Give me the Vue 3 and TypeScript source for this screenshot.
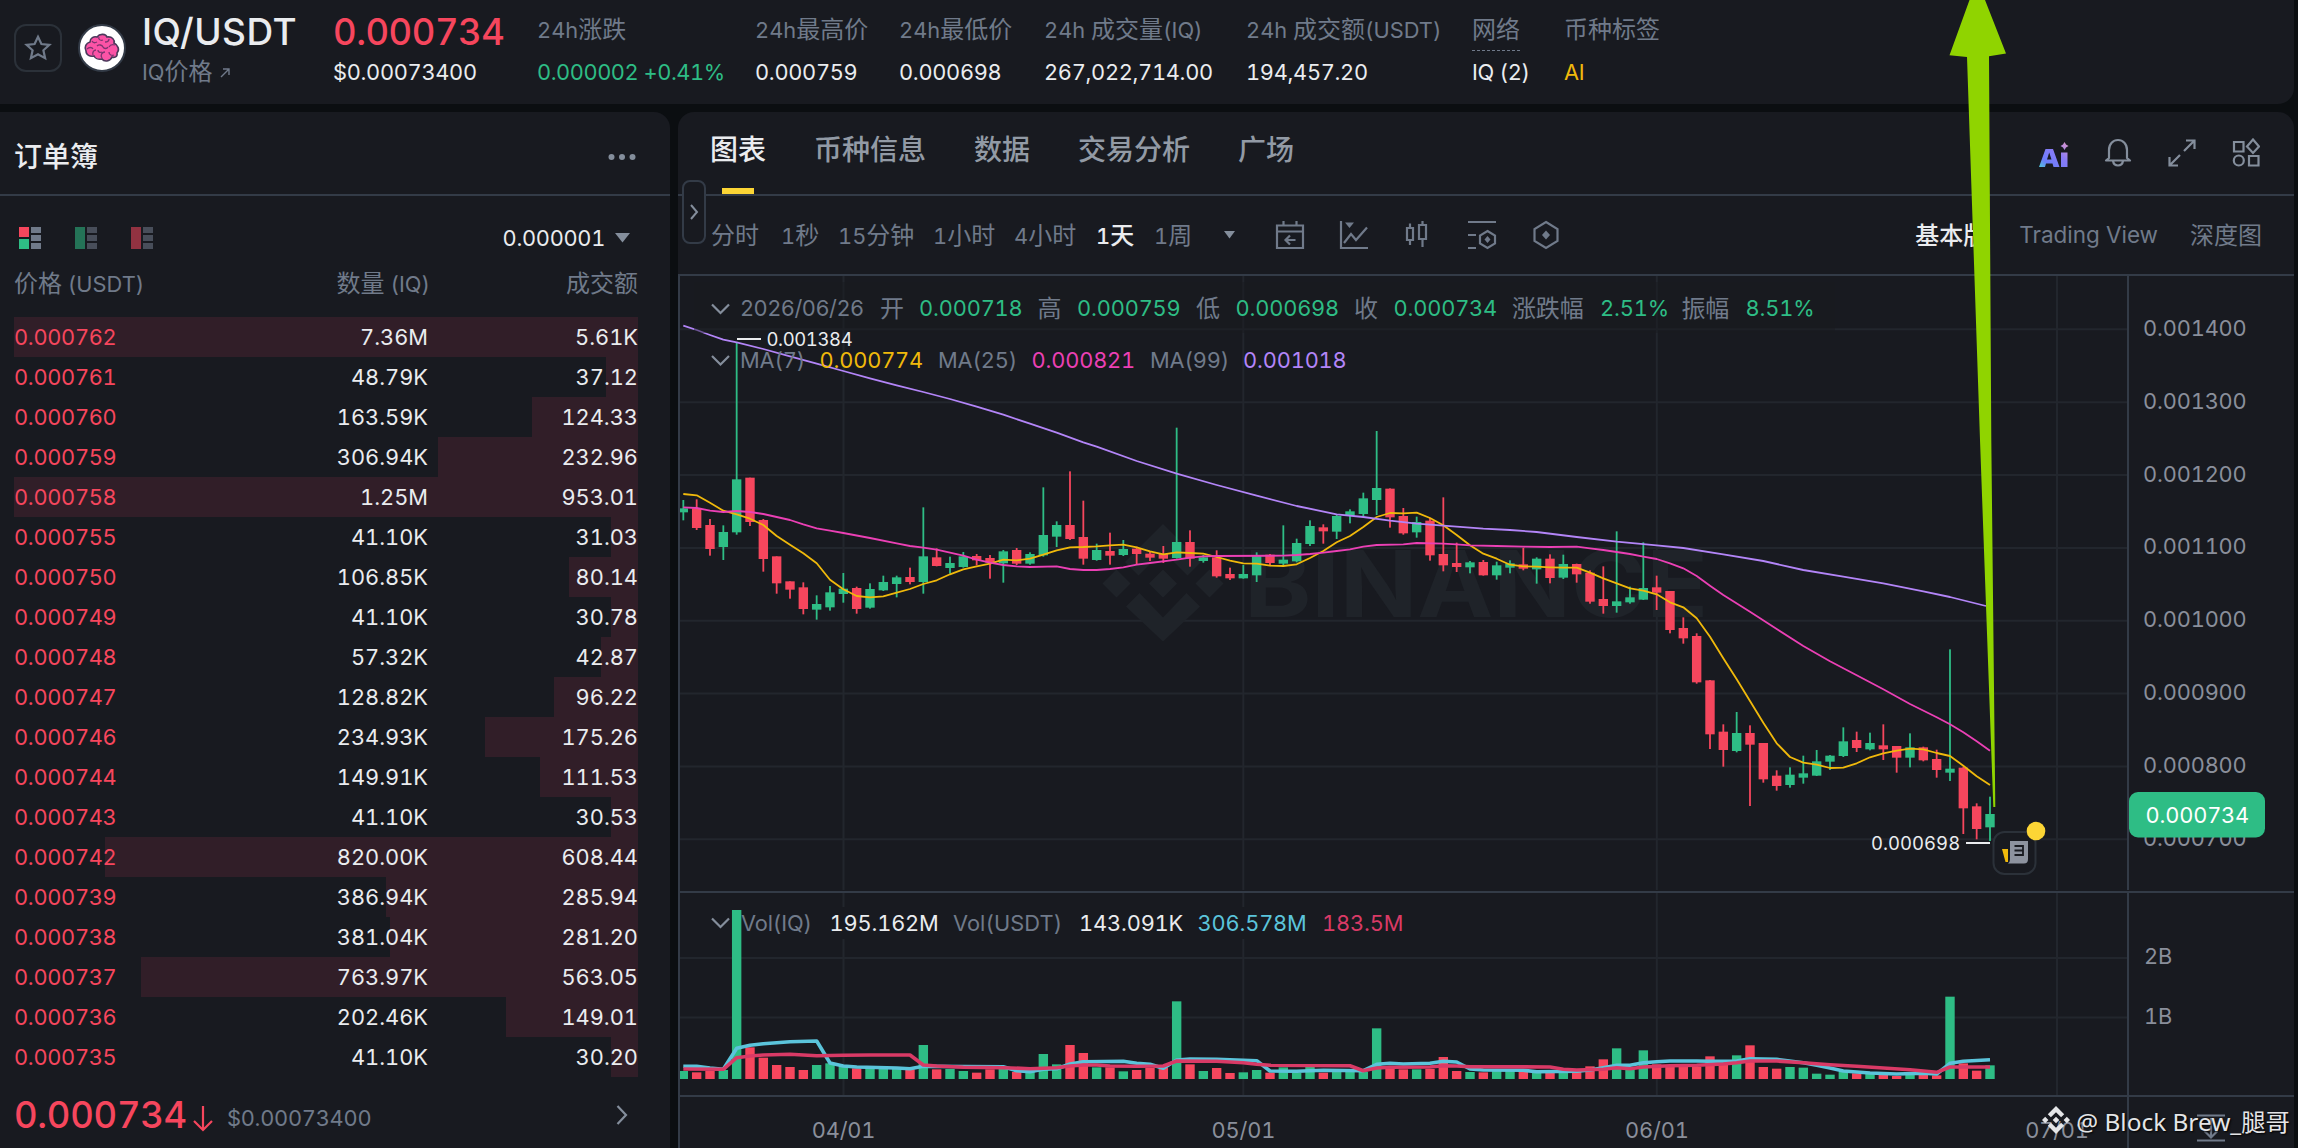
<script setup lang="ts">
interface Candle { x: number; up: boolean; high: number; top: number; bottom: number; low: number; vol: number }
interface Ask { price: string; qty: string; total: string; depth: number }

const stats = [
  { pre: '24h', label: '涨跌', post: '', value: '0.000002 +0.41%', width: 218, cls: 'up' },
  { pre: '24h', label: '最高价', post: '', value: '0.000759', width: 144, cls: '' },
  { pre: '24h', label: '最低价', post: '', value: '0.000698', width: 145, cls: '' },
  { pre: '24h ', label: '成交量', post: '(IQ)', value: '267,022,714.00', width: 202, cls: '' },
  { pre: '24h ', label: '成交额', post: '(USDT)', value: '194,457.20', width: 226, cls: '' },
  { pre: '', label: '网络', post: '', value: 'IQ (2)', width: 92, cls: 'net' },
  { pre: '', label: '币种标签', post: '', value: 'AI', width: 110, cls: 'tag' },
]

const asks: Ask[] = ([
  ['0.000762', '7.36M', '5.61K', 624], ['0.000761', '48.79K', '37.12', 32], ['0.000760', '163.59K', '124.33', 106],
  ['0.000759', '306.94K', '232.96', 200], ['0.000758', '1.25M', '953.01', 624], ['0.000755', '41.10K', '31.03', 27],
  ['0.000750', '106.85K', '80.14', 69], ['0.000749', '41.10K', '30.78', 27], ['0.000748', '57.32K', '42.87', 37],
  ['0.000747', '128.82K', '96.22', 84], ['0.000746', '234.93K', '175.26', 153], ['0.000744', '149.91K', '111.53', 98],
  ['0.000743', '41.10K', '30.53', 27], ['0.000742', '820.00K', '608.44', 533], ['0.000739', '386.94K', '285.94', 252],
  ['0.000738', '381.04K', '281.20', 248], ['0.000737', '763.97K', '563.05', 497], ['0.000736', '202.46K', '149.01', 132],
  ['0.000735', '41.10K', '30.20', 27],
] as [string, string, string, number][]).map(([price, qty, total, depth]) => ({ price, qty, total, depth }))

const tabs = ['图表', '币种信息', '数据', '交易分析', '广场']
const intervals = [
  { n: '', t: '分时', w: 70 }, { n: '1', t: '秒', w: 57 }, { n: '15', t: '分钟', w: 95 }, { n: '1', t: '小时', w: 81 },
  { n: '4', t: '小时', w: 82 }, { n: '1', t: '天', w: 58 }, { n: '1', t: '周', w: 67 },
]

const X0 = 683.33
const STEP = 13.3333
const cx = (i: number): number => X0 + i * STEP

// Each entry: direction, high, body top, body bottom, low in thirds of a pixel below y = 300
const series = `g600,625,637,661 r598,625,684,690 r657,675,747,767 g676,696,741,780 g127,538,697,704 r533,533,666,678
r657,660,777,815 r769,769,850,881 r844,844,869,896 r847,862,927,943 g886,912,929,959 g858,877,922,932 g819,866,882,908
r860,864,927,941 g850,867,923,926 g827,846,871,873 g827,832,852,892 r803,831,846,853 g622,769,846,881 r745,772,798,799
g770,789,804,821 g756,769,801,803 r762,768,781,796 r765,774,788,836 g750,754,790,848 r744,750,791,795 g757,762,791,794
g562,705,766,770 g664,675,710,741 r514,675,717,720 r602,711,776,794 g731,750,780,782 r698,753,767,794 g720,747,765,768
r740,746,762,794 r755,761,773,783 r738,762,776,789 g383,726,774,776 r691,726,776,800 g765,772,783,788 r751,772,829,833
r803,822,835,840 g795,822,835,836 g757,767,826,846 r762,764,789,797 g676,779,791,795 g716,729,784,787 g661,678,732,738
r673,682,694,731 g645,648,695,717 g628,634,647,670 g578,595,642,649 g393,564,600,645 r565,566,652,683 r624,648,700,704
g650,666,697,713 r654,662,766,782 r592,762,796,814 r728,789,801,816 g783,787,802,820 r780,786,826,827 g785,796,826,839
g781,790,803,820 r743,793,806,811 g772,776,808,851 r763,776,834,850 g764,792,833,837 r791,792,823,848 r811,818,905,911
r799,897,918,941 g694,904,918,938 g860,892,907,911 g727,864,899,900 r827,862,878,930 r873,873,990,1000 r952,984,1015,1031
r1000,1008,1147,1151 r1140,1141,1303,1347 r1273,1295,1350,1400 g1236,1299,1353,1357 r1276,1299,1334,1518
r1329,1329,1438,1448 r1411,1427,1458,1472 g1402,1424,1455,1463 g1367,1420,1433,1451 g1350,1384,1427,1428
g1365,1367,1385,1410 g1282,1324,1368,1371 r1295,1320,1344,1356 g1298,1329,1348,1351 r1273,1336,1348,1380
r1338,1338,1373,1418 g1300,1342,1373,1402 r1340,1342,1381,1384 r1349,1377,1410,1433 g1048,1406,1418,1443
r1400,1403,1525,1602 r1510,1519,1587,1618 g1490,1542,1582,1623`

// Bar heights, thirds of a pixel
const volumes = `24 20 24 27 507 95 64 42 36 27 42 47 37 32 30 30 30 29 102 29 30 24 19 29 30 21 21 75 44 102 78 35 35 23 27 33 35 233
44 24 33 18 20 27 19 35 19 39 19 22 22 22 152 32 29 29 30 66 24 21 20 26 24 26 19 18 21 21 38 59 92 31 86 44 37 37 37 68 45 71 101
36 31 36 34 16 13 21 17 17 12 9 12 12 11 247 47 25 41`.trim().split(/\s+/).map(Number)

const candles: Candle[] = series.trim().split(/\s+/).map((s, i) => {
  const [high, top, bottom, low] = s.slice(1).split(',').map(v => 300 + Number(v) / 3)
  return { x: cx(i), up: s[0] === 'g', high, top, bottom, low, vol: volumes[i] / 3 }
})

const line = (pairs: string, base: number): string =>
  pairs.trim().split(/\s+/).map(p => {
    const [i, v] = p.split(':').map(Number)
    return `${cx(i).toFixed(1)},${(base + v / 3).toFixed(1)}`
  }).join(' ')

const dense = (values: string): string => values.trim().split(/\s+/).map((v, i) => `${i}:${v}`).join(' ')

const ma7 = line(dense(`582 586 608 632 643 656 675 708 734 760 790 839 868 888 892 889 878 867 852 841 823 808 799 791 779 781 776 764
751 742 741 739 736 734 742 754 763 757 759 761 771 782 790 791 797 798 793 774 753 727 708 681 651 639 640 638 654 676 705 736 761
776 794 799 800 802 803 803 818 835 850 865 872 883 907 922 955 1010 1075 1138 1203 1268 1330 1371 1388 1394 1404 1403 1390 1372
1360 1352 1346 1348 1359 1368 1397 1429 1455`), 300)
const ma25 = line(`0:622 1:624 2:632 3:636 4:633 5:636 6:642 7:651 8:660 9:673 10:685 11:692 12:699 14:714 16:730 17:738 18:743
19:749 20:758 21:767 22:779 23:788 24:795 25:799 26:801 28:799 29:807 30:810 31:810 32:807 33:802 34:794 35:789 37:779 38:773
39:769 40:768 45:767 46:765 47:762 48:758 49:753 50:748 51:740 52:735 54:733 55:729 57:731 58:733 59:736 61:738 63:740 65:741
67:740 68:745 69:750 70:756 71:762 72:770 73:777 74:790 75:805 76:828 77:857 78:885 80:935 82:987 84:1038 86:1084 88:1126
90:1168 92:1212 94:1252 95:1273 96:1297 97:1324 98:1352`, 300)
const ma99 = line(`0:77 1:90 2:105 3:119 4:127 6:147 8:169 10:191 12:213 14:235 16:256 18:276 20:297 22:320 24:344 26:371 28:398
30:427 31:440 34:483 37:521 40:555 43:587 46:618 49:643 51:651 53:662 55:671 57:677 60:686 62:690 64:696 67:711 70:725 73:736
75:744 78:763 81:783 84:810 87:830 90:850 93:874 95:891 97.7:918`, 300)
const volFast = line(`0:589 1:589 2:594 3:598 4:535 5:526 6:521 7:518 8:515 10:513 11:579 12:588 13:591 16:594 17:596 18:589
24:590 25:602 26:605 27:598 28:596 29:582 30:575 33:574 34:580 35:583 36:595 37:570 38:567 40:568 41:569 43:572 44:603 46:604
48:601 51:602 52:583 53:580 54:582 56:580 57:574 58:576 59:597 60:600 63:601 64:605 67:604 68:600 69:593 70:586 71:586 72:578
73:575 74:573 76:573 77:574 79:573 80:566 82:568 84:578 85:586 86:594 87:603 89:609 91:612 93:610 94:612 95:580 96:574 98:569`, 870)
const volSlow = line(`0:597 3:598 4:563 5:558 6:555 8:553 10:557 12:556 14:555 17:555 18:585 19:588 21:592 24:593 26:596 28:593
29:588 30:585 31:585 32:588 34:589 36:588 37:573 40:574 42:578 43:583 44:586 50:587 51:602 52:594 53:592 56:591 57:587 58:588
59:590 65:591 66:598 67:600 69:598 70:593 71:596 72:591 74:587 76:586 78:582 79:578 80:573 82:573 84:578 86:584 88:589 90:594
92:599 94:607 95:591 98:591`, 870)

const priceTicks = ['0.001400', '0.001300', '0.001200', '0.001100', '0.001000', '0.000900', '0.000800', '0.000700']
  .map((label, i) => ({ label, y: 329.3 + i * 72.86 }))
const dates = [{ label: '04/01', x: 843.5 }, { label: '05/01', x: 1243.3 }, { label: '06/01', x: 1656.8 }, { label: '07/01', x: 2057 }]

const ohlc = [
  { t: '开', x: 880, v: '0.000718', vx: 919 }, { t: '高', x: 1037.5, v: '0.000759', vx: 1077 },
  { t: '低', x: 1196, v: '0.000698', vx: 1235.5 }, { t: '收', x: 1354, v: '0.000734', vx: 1393.5 },
  { t: '涨跌幅', x: 1512, v: '2.51%', vx: 1600 }, { t: '振幅', x: 1681.5, v: '8.51%', vx: 1745.5 },
]
const averages = [
  { t: 'MA(7)', x: 740, v: '0.000774', vx: 819.5, c: '#f0b90b' },
  { t: 'MA(25)', x: 938, v: '0.000821', vx: 1031.5, c: '#eb40b5' },
  { t: 'MA(99)', x: 1150, v: '0.001018', vx: 1243, c: '#b385f8' },
]
</script>

<template>
  <div class="app">
    <header class="ticker">
      <div class="fav">
        <svg width="28" height="28" viewBox="0 0 28 28"><path d="M14 2.800l3.400 7.200 8 .9-6 5.400 1.700 7.900-7.100-4-7.100 4 1.700-7.900-6-5.400 8-.9z" fill="none" stroke="#707a8a" stroke-width="2.200" /></svg>
      </div>
      <svg class="coin" width="48" height="48" viewBox="0 0 48 48">
        <circle cx="24" cy="24" r="23" fill="#fff" stroke="#333b47" stroke-width="2" />
        <path d="M8 27c-2-4 0-8 4-9 0-4 4-6 7-5 3-4 9-3 10 0 5-1 8 3 7 6 4 2 6 7 3 10 1 4-3 5-5 4-2 5-8 5-10 2-4 1-7-1-8-3-4 1-8-1-8-5z" fill="#fb53a6" stroke="#4c3a5c" stroke-width="1.600" />
        <path d="M14 17c1 2 3 2 5 1M21 13c-1 2 1 4 4 3M31 15c0 2-2 3-4 3M37 21c-3-1-5 0-6 2M9 25c2-2 5-2 6 0M15 31c-1-3 1-5 3-5M24 34c-2-3 0-6 3-6M36 31c-2 1-5 0-5-3M19 22c2-2 5-1 6 1s4 2 5 0M24 28c-2 1-4 0-4-2" fill="none" stroke="#7d3470" stroke-width="1.300" />
      </svg>
      <div class="pair">
        <div class="pair-name">IQ/USDT</div>
        <div class="sub"><i>IQ</i>价格 <svg width="10" height="10" viewBox="0 0 10 10"><path d="M1 9L9 1M3 1h6v6" fill="none" stroke="#707a8a" stroke-width="1.400" /></svg></div>
      </div>
      <div class="last">
        <div class="last-price">0.000734</div>
        <div class="value">$0.00073400</div>
      </div>
      <div v-for="s in stats" :key="s.label" class="stat" :class="s.cls" :style="{ width: s.width + 'px' }">
        <div class="label"><span><i>{{ s.pre }}</i>{{ s.label }}<i>{{ s.post }}</i></span></div>
        <div class="value">{{ s.value }}</div>
      </div>
    </header>

    <div class="main">
      <section class="book">
        <div class="book-title">
          <span>订单簿</span>
          <svg width="28" height="8" viewBox="0 0 28 8" fill="#848e9c"><circle cx="3.500" cy="4" r="3" /><circle cx="14" cy="4" r="3" /><circle cx="24.500" cy="4" r="3" /></svg>
        </div>
        <div class="book-tools">
          <svg width="22" height="22" viewBox="0 0 22 22"><path d="M0 0h10v10H0z" fill="#f6465d" /><path d="M0 12h10v10H0z" fill="#2ebd85" /><path d="M12 0h10v6H12zM12 8h10v6H12zM12 16h10v6H12z" fill="#707a8a" /></svg>
          <svg width="22" height="22" viewBox="0 0 22 22" opacity=".55"><path d="M0 0h10v22H0z" fill="#2ebd85" /><path d="M12 0h10v6H12zM12 8h10v6H12zM12 16h10v6H12z" fill="#707a8a" /></svg>
          <svg width="22" height="22" viewBox="0 0 22 22" opacity=".55"><path d="M0 0h10v22H0z" fill="#f6465d" /><path d="M12 0h10v6H12zM12 8h10v6H12zM12 16h10v6H12z" fill="#707a8a" /></svg>
          <span class="tick">0.000001</span>
          <svg class="tri" width="16" height="10" viewBox="0 0 16 10"><path d="M0 0h15L7.500 9.500z" fill="#848e9c" /></svg>
        </div>
        <div class="book-head">
          <span>价格<i> (USDT)</i></span><span>数量<i> (IQ)</i></span><span>成交额</span>
        </div>
        <div v-for="a in asks" :key="a.price" class="ask">
          <div class="depth" :style="{ width: a.depth + 'px' }"></div>
          <span class="down">{{ a.price }}</span><span>{{ a.qty }}</span><span>{{ a.total }}</span>
        </div>
        <div class="book-last">
          <span class="big">0.000734</span>
          <svg class="arr" width="20" height="26" viewBox="0 0 20 26"><path d="M10 0v23M1 15l9 9 9-9" fill="none" stroke="#f6465d" stroke-width="2.200" /></svg>
          <span class="usd">$0.00073400</span>
          <svg width="12" height="20" viewBox="0 0 12 20"><path d="M1.500 1l8.500 9-8.500 9" fill="none" stroke="#848e9c" stroke-width="2.200" /></svg>
        </div>
      </section>

      <section class="panel">
        <nav class="tabs">
          <span v-for="(t, i) in tabs" :key="t" class="tab" :class="{ on: i === 0 }">{{ t }}</span>
          <div class="tab-icons">
            <svg width="30" height="30" viewBox="0 0 30 30">
              <defs><linearGradient id="ai" x1="0" y1="1" x2="1" y2="0"><stop offset="0" stop-color="#4fc9d8" /><stop offset=".22" stop-color="#6b7dfb" /><stop offset=".6" stop-color="#8a7bf5" /><stop offset="1" stop-color="#e39ac8" /></linearGradient></defs>
              <path fill="url(#ai)" fill-rule="evenodd" d="M0 29L6.500 11h7.500l6.500 18h-6l-1-3.500H7L6 29zM8 21.500h4.500L10.200 14.500zM22 14.500h6.500V29H22zM25.500 4l1.500 2.600L29.500 8 27 9.400 25.500 12 24 9.400 21.500 8 24 6.600z" />
            </svg>
            <svg width="28" height="30" viewBox="0 0 28 30"><path d="M5 20V12c0-6 4-10 9-10s9 4 9 10v8l3 2.500H2zM9 23c1 6 9 6 10 0" fill="none" stroke="#848e9c" stroke-width="2.200" stroke-linejoin="round" /></svg>
            <svg width="30" height="30" viewBox="0 0 30 30"><path d="M17 13L27 3M19 2.500h8.500V11M13 17L3 27M2.500 19v8.500H11" fill="none" stroke="#848e9c" stroke-width="2.200" /></svg>
            <svg width="28" height="30" viewBox="0 0 28 30"><path d="M2 4h9.500v9.500H2zM17 18h9.500v9.500H17zM21 1.500L27 8.500l-6 6.500-6-6.500z" fill="none" stroke="#848e9c" stroke-width="2.200" /><circle cx="6.800" cy="22.500" r="5" fill="none" stroke="#848e9c" stroke-width="2.200" /></svg>
          </div>
          <div class="handle"><svg width="10" height="16" viewBox="0 0 10 16"><path d="M2 1l6 7-6 7" fill="none" stroke="#848e9c" stroke-width="2" /></svg></div>
        </nav>

        <div class="tools">
          <span v-for="(t, i) in intervals" :key="i" class="interval" :class="{ on: i === 5 }" :style="{ width: t.w + 'px' }"><i>{{ t.n }}</i>{{ t.t }}</span>
          <svg class="more" width="14" height="10" viewBox="0 0 14 10"><path d="M1 1h11L6.500 8.500z" fill="#848e9c" /></svg>
          <div class="tool-icons">
            <svg width="32" height="32" viewBox="0 0 32 32"><path d="M3 6.500h26V29H3zM3 12.500h26M9.500 2v5M22.500 2v5M21.500 21H12M16 16.500L11.500 21l4.500 4.500" /></svg>
            <svg width="32" height="32" viewBox="0 0 32 32"><path d="M3 2v27h27M6 24l7-9 5 6 11-12.500" /><path d="M7 3.500h9L11.500 9z" fill="#707a8a" stroke="none" /></svg>
            <svg width="32" height="32" viewBox="0 0 32 32"><path d="M5 9h6v12H5zM8 4.500V9M8 21v5M17 6h7v14h-7zM20.500 2v4M20.500 20v8" /></svg>
            <svg width="32" height="32" viewBox="0 0 32 32"><path d="M2 3h28M2 16h8M2 29h8M21.500 12l7.500 4.500v8L21.500 29 14 24.500v-8z" /><path d="M21.500 17l3 3.500-3 3.500-3-3.500z" fill="#707a8a" stroke="none" /></svg>
            <svg width="32" height="32" viewBox="0 0 32 32"><path d="M16 3l11.500 7v12L16 29 4.500 22V10z" /><path d="M16 11.500l4 4.500-4 4.500-4-4.500z" fill="#707a8a" stroke="none" /></svg>
          </div>
          <span class="mode on">基本版</span><span class="mode tv">Trading View</span><span class="mode">深度图</span>
        </div>

        <svg class="chart" width="1616" height="872" viewBox="678 276 1616 872">
          <g class="grid">
            <path v-for="t in priceTicks" :key="t.label" :d="`M680 ${t.y}H2127`" />
            <path d="M680 958H2127M680 1017.400H2127" />
            <path v-for="d in dates.slice(0, 2)" :key="d.label" :d="`M${d.x} 276V890M${d.x} 893V907M${d.x} 939V1095`" />
            <path v-for="d in dates.slice(2)" :key="d.label" :d="`M${d.x} 276V890M${d.x} 893V1095`" />
          </g>
          <g fill="#1f2329">
            <path d="M1163 524l38 38-13.500 13.500L1163 551l-24.500 24.500L1125 562zM1163 569.500l14 14-14 14-14-14zM1116.500 569.500l14 14-14 14-14-14zM1209.500 569.500l14 14-14 14-14-14zM1139.500 593l23.500 24.500 23.500-24.500 13.500 13.500-37 35-37-35z" />
            <text x="1244" y="616.500" class="brand" textLength="464" lengthAdjust="spacingAndGlyphs">BINANCE</text>
          </g>
          <g v-for="(c, i) in candles" :key="i" :fill="c.up ? '#2ebd85' : '#f6465d'">
            <rect :x="c.x - 0.9" :y="c.high" width="1.8" :height="c.low - c.high" />
            <rect :x="Math.max(680, c.x - 4.7)" :y="c.top" :width="i ? 9.4 : 8" :height="c.bottom - c.top" />
            <rect :x="Math.max(680, c.x - 4.7)" :y="1079 - c.vol" :width="i ? 9.4 : 8" :height="c.vol" />
          </g>
          <g fill="none" stroke-width="1.800" stroke-linejoin="round">
            <polyline :points="ma7" stroke="#f0b90b" />
            <polyline :points="ma25" stroke="#eb40b5" />
            <polyline :points="ma99" stroke="#b385f8" />
            <polyline :points="volFast" stroke="#5bc4db" stroke-width="3.600" />
            <polyline :points="volSlow" stroke="#d93a66" stroke-width="3.600" />
          </g>
          <rect x="694" y="282" width="1141" height="51" fill="#181a20" opacity=".45" />
          <g class="frame">
            <path d="M679 276V1148M678 892H2294M678 1096H2294M2128 276V890M2128 893V1148" />
          </g>

          <path d="M712 304.500l8.500 8.500 8.500-8.500M712 356l8.500 8.500 8.500-8.500M712 918.500l8.500 8.500 8.500-8.500" fill="none" stroke="#848e9c" stroke-width="2.200" />
          <g class="muted">
            <text x="740" y="316.300" textLength="124">2026/06/26</text>
            <template v-for="o in ohlc" :key="o.t">
              <text :x="o.x" y="317" class="han">{{ o.t }}</text>
              <text :x="o.vx" y="316.300" class="green">{{ o.v }}</text>
            </template>
            <template v-for="m in averages" :key="m.t">
              <text :x="m.x" y="368">{{ m.t }}</text>
              <text :x="m.vx" y="368" :style="{ fill: m.c }">{{ m.v }}</text>
            </template>
            <text x="741" y="931">Vol(IQ)</text>
            <text x="829.500" y="931" class="w">195.162M</text>
            <text x="953" y="931" textLength="109">Vol(USDT)</text>
            <text x="1079" y="931" class="w">143.091K</text>
            <text x="1197.500" y="931" class="teal">306.578M</text>
            <text x="1322" y="931" class="rose">183.5M</text>
          </g>

          <g class="mark">
            <path d="M737 339h24M1966 843h24" stroke="#eaecef" stroke-width="2" />
            <text x="766.500" y="346" textLength="86">0.001384</text>
            <text x="1871" y="850" textLength="89">0.000698</text>
          </g>

          <g class="axis">
            <text v-for="t in priceTicks" :key="t.label" x="2143" :y="t.y + 6.5">{{ t.label }}</text>
            <text x="2144" y="964">2B</text>
            <text x="2144" y="1024">1B</text>
            <text v-for="d in dates" :key="d.label" :x="d.x" y="1138" text-anchor="middle">{{ d.label }}</text>
            <path d="M2197 1115.500h28M2197 1140.500h28M2211 1118v18M2204.500 1131l6.500 6.500 6.500-6.500" fill="none" stroke="#707a8a" stroke-width="2.200" />
          </g>
          <rect x="2129" y="792" width="136" height="45.500" rx="9" fill="#2ebd85" />
          <text x="2145.500" y="823" fill="#fff">0.000734</text>

          <rect x="1993.500" y="832" width="42" height="42" rx="11" fill="#181a20" stroke="#2b3139" stroke-width="2" />
          <path d="M2002 849h6v13h-2.500z" fill="#f0b90b" />
          <path d="M2010 841h18v18q0 4.500-4 4.500h-16q2-1.500 2-4z" fill="#8d939f" />
          <path d="M2014.500 846h9M2014.500 850.500h9M2014.500 855h9M2023 845v11" stroke="#181a20" stroke-width="1.800" />
          <circle cx="2036" cy="831" r="9.300" fill="#fcd535" />
        </svg>
      </section>
    </div>

    <svg class="pointer" width="60" height="808" viewBox="1948 0 60 808">
      <path d="M1969.500 0H1985L2006 53.500 1989 56.300 1991.300 440 1995.300 807H1993.300L1980 440 1967 57 1949.500 55.300z" fill="#90d400" />
    </svg>

    <div class="credit">
      <svg width="28" height="28" viewBox="0 0 28 28" fill="#e4e5e7"><path d="M14 0l8.200 8.200-3.100 3.100L14 6.200l-5.100 5.100-3.100-3.100zM14 10.700l3.300 3.300-3.300 3.300-3.300-3.300zM3.200 10.800L6.400 14l-3.200 3.200L0 14zM24.800 10.800L28 14l-3.200 3.200-3.200-3.200zM8.900 16.700l5.100 5.100 5.100-5.100 3.100 3.100L14 28l-8.200-8.200z" /></svg>
      <span>@ Block Brew_腿哥</span>
    </div>
  </div>
</template>

<style>
body { background: #0b0e11; overflow: hidden; }
</style>

<style scoped>
.app {
  position: relative;
  width: 2298px;
  height: 1148px;
  overflow: hidden;
  background: #0b0e11;
  color: #eaecef;
  font-family: Inter, "Noto Sans CJK SC", sans-serif;
  font-size: 21.8px;
  font-variant-numeric: tabular-nums;
  display: flex;
  flex-direction: column;
  gap: 8px;
}
svg { flex: none; display: block; }
i { font-style: normal; font-size: 21.8px; white-space: pre; }
.down { color: #f6465d; letter-spacing: -0.3px; }

.ticker {
  flex: none;
  box-sizing: border-box;
  width: 2294px;
  height: 104px;
  padding-left: 14px;
  background: #181a20;
  border-radius: 0 0 16px 0;
  display: flex;
}
.fav {
  box-sizing: border-box;
  width: 48px;
  height: 48px;
  margin-top: 24px;
  border: 2px solid #2b3139;
  border-radius: 12px;
  display: flex;
  align-items: center;
  justify-content: center;
}
.coin { margin: 24px 16px 0 16px; }
.pair { width: 191px; }
.last { width: 204px; }
.pair-name, .last-price { height: 60px; line-height: 64px; font-weight: 500; white-space: nowrap; }
.pair-name { font-size: 37px; letter-spacing: 0.5px; }
.last-price { color: #f6465d; font-size: 36.5px; letter-spacing: -0.5px; }
.sub { display: flex; align-items: center; height: 24px; line-height: 24px; color: #707a8a; font-size: 24px; white-space: nowrap; }
.sub svg { margin: 2px 0 0 7px; }
.value { height: 24px; line-height: 24px; letter-spacing: -0.3px; white-space: nowrap; }
.up .value { color: #2ebd85; letter-spacing: -0.45px; }
.stat .label { box-sizing: border-box; height: 60px; padding-top: 15px; line-height: 30px; font-size: 24px; color: #707a8a; white-space: nowrap; }
.net .label span { display: inline-block; height: 35px; border-bottom: 1.5px dashed #707a8a; }
.tag .value { color: #f0b90b; }

.main { display: flex; gap: 8px; height: 1036px; }
.book { width: 670px; background: #181a20; border-radius: 0 16px 0 0; }
.book-title {
  box-sizing: border-box;
  height: 84px;
  padding: 4px 34px 0 14px;
  border-bottom: 2px solid #333b47;
  display: flex;
  align-items: center;
  justify-content: space-between;
  font-size: 28px;
  font-weight: 500;
}
.book-title svg { margin-top: 3px; }
.book-tools { height: 84px; padding: 0 39px 0 19px; display: flex; align-items: center; gap: 34px; }
.tick { margin-left: auto; letter-spacing: -0.3px; }
.tri { margin-left: -24px; }
.book-head, .ask { display: grid; grid-template-columns: 200px 214px 210px; width: 624px; margin-left: 14px; }
.book-head { height: 37px; line-height: 8px; font-size: 24px; color: #707a8a; }
.book-head span + span, .ask span + span { text-align: right; }
.book-head span:nth-child(2) { margin-right: -2px; }
.ask { position: relative; height: 40px; line-height: 40px; }
.ask span { position: relative; }
.depth { position: absolute; top: 0; right: 0; height: 40px; background: #311e28; }
.book-last { box-sizing: border-box; display: flex; align-items: center; height: 75px; padding: 0 42px 0 14px; }
.big { font-size: 36.5px; font-weight: 500; letter-spacing: -0.3px; color: #f6465d; }
.arr { margin-left: 6px; margin-top: 8px; }
.usd { margin: 6px auto 0 14px; letter-spacing: -0.25px; color: #707a8a; }

.panel { width: 1616px; background: #181a20; border-radius: 16px 16px 0 0; }
.tabs {
  position: relative;
  box-sizing: border-box;
  height: 84px;
  padding: 0 34px 0 32px;
  border-bottom: 2px solid #333b47;
  display: flex;
  gap: 48px;
  font-size: 28px;
  font-weight: 500;
  color: #929aa5;
}
.tab { position: relative; line-height: 76px; }
.tab.on { color: #eaecef; }
.tab.on::after { content: ""; position: absolute; left: 12px; bottom: 0; width: 32px; height: 6px; background: #fcd535; }
.tab-icons { display: flex; gap: 35px; margin: 26px 0 0 auto; }
.handle {
  position: absolute;
  left: 4px;
  top: 68px;
  box-sizing: border-box;
  width: 24px;
  height: 64px;
  border: 2px solid #333b47;
  border-radius: 8px;
  background: #181a20;
  display: flex;
  align-items: center;
  justify-content: center;
}
.tools {
  box-sizing: border-box;
  height: 80px;
  padding: 0 32px 0 33px;
  border-bottom: 2px solid #333b47;
  display: flex;
  align-items: center;
  font-size: 24px;
  color: #707a8a;
  white-space: nowrap;
}
.interval, .mode { padding-bottom: 3px; }
.interval { flex: none; }
.interval.on, .mode.on { color: #eaecef; font-weight: 500; }
.more { margin-left: 2px; }
.tool-icons { display: flex; gap: 32px; margin: 0 auto 0 37px; }
.tool-icons path { fill: none; stroke: #707a8a; stroke-width: 2.2; }
.tool-icons path[stroke="none"] { fill: #707a8a; stroke: none; }
.mode { margin-left: 32px; }
.mode.tv { font-size: 22.5px; padding-bottom: 1px; }

.chart text { letter-spacing: -0.15px; }
.grid path { stroke: #22262d; stroke-width: 2; }
.frame path { stroke: #333b47; stroke-width: 2; }
.brand { font-size: 92px; font-weight: 700; }
.muted text { fill: #707a8a; font-size: 21.8px; }
.muted .han { font-size: 24px; }
.muted .green { fill: #2ebd85; }
.muted .w { fill: #eaecef; }
.muted .teal { fill: #5bc4db; }
.muted .rose { fill: #d93a66; }
.axis text { fill: #8a8f9b; }
.mark text { font-size: 18.5px; fill: #eaecef; }

.pointer { position: absolute; left: 1948px; top: 0; }
.credit {
  position: absolute;
  right: 8px;
  top: 1102px;
  display: flex;
  align-items: center;
  gap: 6px;
  height: 36px;
  color: #e4e5e7;
  font-family: "Noto Sans", "Noto Sans CJK SC", sans-serif;
  font-size: 24.4px;
  text-shadow: 1px 1px 2px #000;
  white-space: nowrap;
}
</style>
